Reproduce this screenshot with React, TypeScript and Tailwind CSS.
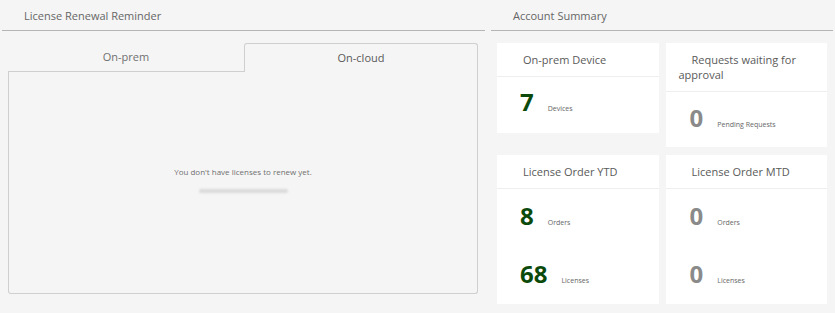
const font = { fontFamily: '"Open Sans", "Liberation Sans", sans-serif' };

type Stat = { value: string; label: string; active: boolean };

const StatRow = ({ value, label, active }: Stat) => (
  <div className="flex items-baseline">
    <span className={`text-[24px] font-bold leading-none ${active ? 'text-[#0c4a0c]' : 'text-[#8a8a8a]'}`}>{value}</span>
    <span className="ml-[14px] text-[7px] text-[#666]">{label}</span>
  </div>
);

const Card = ({ title, children, className }: { title: React.ReactNode; children: React.ReactNode; className?: string }) => (
  <div className={`bg-white ${className ?? ''}`}>
    <div className="border-b border-[#eeeeee] px-[13px] py-[9px] text-[11px] leading-[15px] text-[#5a5a5a] indent-[13px]">{title}</div>
    {children}
  </div>
);

const App = () => {
  return (
    <div className="w-[835px] h-[313px] bg-[#f5f5f5] flex" style={font}>
      {/* license renewal */}
      <div className="w-[485px] pl-[2px] flex flex-col">
        <div className="h-[31px] border-b border-[#b5b5b5] pl-[22px] pt-[8px] text-[11px] text-[#666]">License Renewal Reminder</div>
        <div className="ml-[6px] mt-[12px] w-[470px] flex flex-col">
          <div className="flex h-[29px]">
            <div className="flex-1 border-b border-[#cfcfcf] flex items-center justify-center text-[11px] text-[#707070]">On-prem</div>
            <div className="w-[234px] border border-b-0 border-[#cfcfcf] rounded-t-[3px] flex items-center justify-center text-[11px] text-[#5a5a5a]">On-cloud</div>
          </div>
          <div className="h-[222px] border border-t-0 border-[#cfcfcf] rounded-b-[3px] flex flex-col items-center pt-[94px]">
            <div className="text-[8px] text-[#707070]">You don't have licenses to renew yet.</div>
            <div className="mt-[11px] h-[4px] w-[89px] rounded-full bg-[#dadada] blur-[1px]" />
          </div>
        </div>
      </div>

      {/* account summary */}
      <div className="flex-1 pl-[6px] pr-[2px] flex flex-col">
        <div className="h-[31px] border-b border-[#b5b5b5] pl-[22px] pt-[8px] text-[11px] text-[#666]">Account Summary</div>
        <div className="mt-[12px] ml-[6px] w-[330px] grid grid-cols-2 gap-x-[7px] gap-y-[8px] items-start">
          <Card title="On-prem Device" className="h-[90px]">
            <div className="pl-[23px] pt-[13px]">
              <StatRow value="7" label="Devices" active />
            </div>
          </Card>
          <Card title={<>Requests waiting for<br />approval</>} className="h-[104px]">
            <div className="pl-[24px] pt-[14px]">
              <StatRow value="0" label="Pending Requests" active={false} />
            </div>
          </Card>
          <Card title="License Order YTD" className="h-[149px]">
            <div className="pl-[23px] pt-[15px] flex flex-col gap-[33px]">
              <StatRow value="8" label="Orders" active />
              <StatRow value="68" label="Licenses" active />
            </div>
          </Card>
          <Card title="License Order MTD" className="h-[149px]">
            <div className="pl-[24px] pt-[15px] flex flex-col gap-[33px]">
              <StatRow value="0" label="Orders" active={false} />
              <StatRow value="0" label="Licenses" active={false} />
            </div>
          </Card>
        </div>
      </div>
    </div>
  );
};

export default App;
